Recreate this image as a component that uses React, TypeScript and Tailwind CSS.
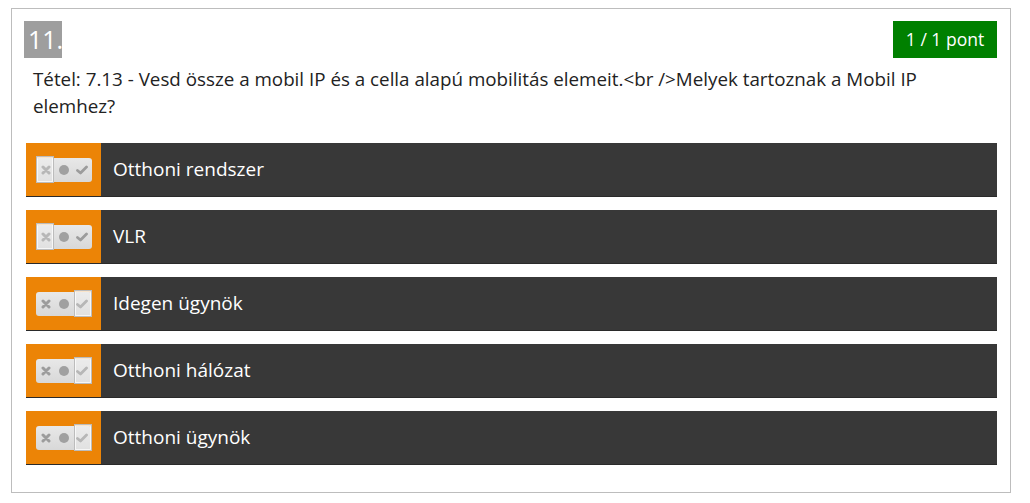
import React from "react";

type Opt = { label: string; sel: "x" | "check" };

const options: Opt[] = [
  { label: "Otthoni rendszer", sel: "x" },
  { label: "VLR", sel: "x" },
  { label: "Idegen ügynök", sel: "check" },
  { label: "Otthoni hálózat", sel: "check" },
  { label: "Otthoni ügynök", sel: "check" },
];

function Toggle({ sel }: { sel: "x" | "check" }) {
  return (
    <div className="relative w-[56px] h-[24px] rounded-[3px] bg-gradient-to-b from-[#e8e8e8] to-[#d8d8d8] flex items-center justify-between px-[3px]">
      <div className="w-[14px] flex justify-center">
        <svg width="10" height="10" viewBox="0 0 10 10">
          <path d="M2 2 L8 8 M8 2 L2 8" stroke="#9c9c9c" strokeWidth="3" strokeLinecap="round" />
        </svg>
      </div>
      <div className="w-[10px] h-[10px] rounded-full bg-[#a0a0a0]" />
      <div className="w-[14px] flex justify-center">
        <svg width="12" height="10" viewBox="0 0 12 10">
          <path d="M1.5 5.5 L4.5 8 L10.5 2" stroke="#9c9c9c" strokeWidth="2.8" fill="none" strokeLinecap="round" strokeLinejoin="round" />
        </svg>
      </div>
      <div
        className={
          "absolute top-[-2px] w-[18px] h-[27px] border border-[#bcbcbc] bg-[#f4f4f4]/30 shadow-[inset_0_0_0_1px_rgba(255,255,255,0.7)] " +
          (sel === "x" ? "left-0" : "right-0")
        }
      />
    </div>
  );
}

export default function App() {
  return (
    <div className="bg-white w-[1030px] h-[503px] pt-[8px] pl-[11px]" style={{ fontFamily: '"Open Sans", "Liberation Sans", sans-serif' }}>
      <div className="w-[1000px] h-[485px] border border-[#bdbdbd] pt-[12px] pl-[12px] pr-[13px]">
        <div className="flex justify-between items-start">
          <div className="h-[37px] w-[38px] bg-[#9e9e9e] text-white text-[25px] leading-[37px] pl-[4px]">11.</div>
          <div className="h-[37px] w-[104px] bg-[#008000] text-white text-[17.5px] leading-[37px] text-center">1 / 1 pont</div>
        </div>
        <div className="mt-[8px] pl-[9px] pr-[2px] text-[18.8px] leading-[27px] text-[#222]">
          Tétel: 7.13 - Vesd össze a mobil IP és a cella alapú mobilitás elemeit.&lt;br /&gt;Melyek tartoznak a Mobil IP elemhez?
        </div>
        <div className="mt-[23px] pl-[2px] flex flex-col gap-[13px]">
          {options.map((o) => (
            <div key={o.label} className="flex h-[54px] bg-[#383838] border-b border-[#2a2a2a]">
              <div className="w-[75px] bg-[#ec8406] flex items-center justify-center">
                <Toggle sel={o.sel} />
              </div>
              <div className="flex items-center pl-[12px] text-white text-[19px]">{o.label}</div>
            </div>
          ))}
        </div>
      </div>
    </div>
  );
}
